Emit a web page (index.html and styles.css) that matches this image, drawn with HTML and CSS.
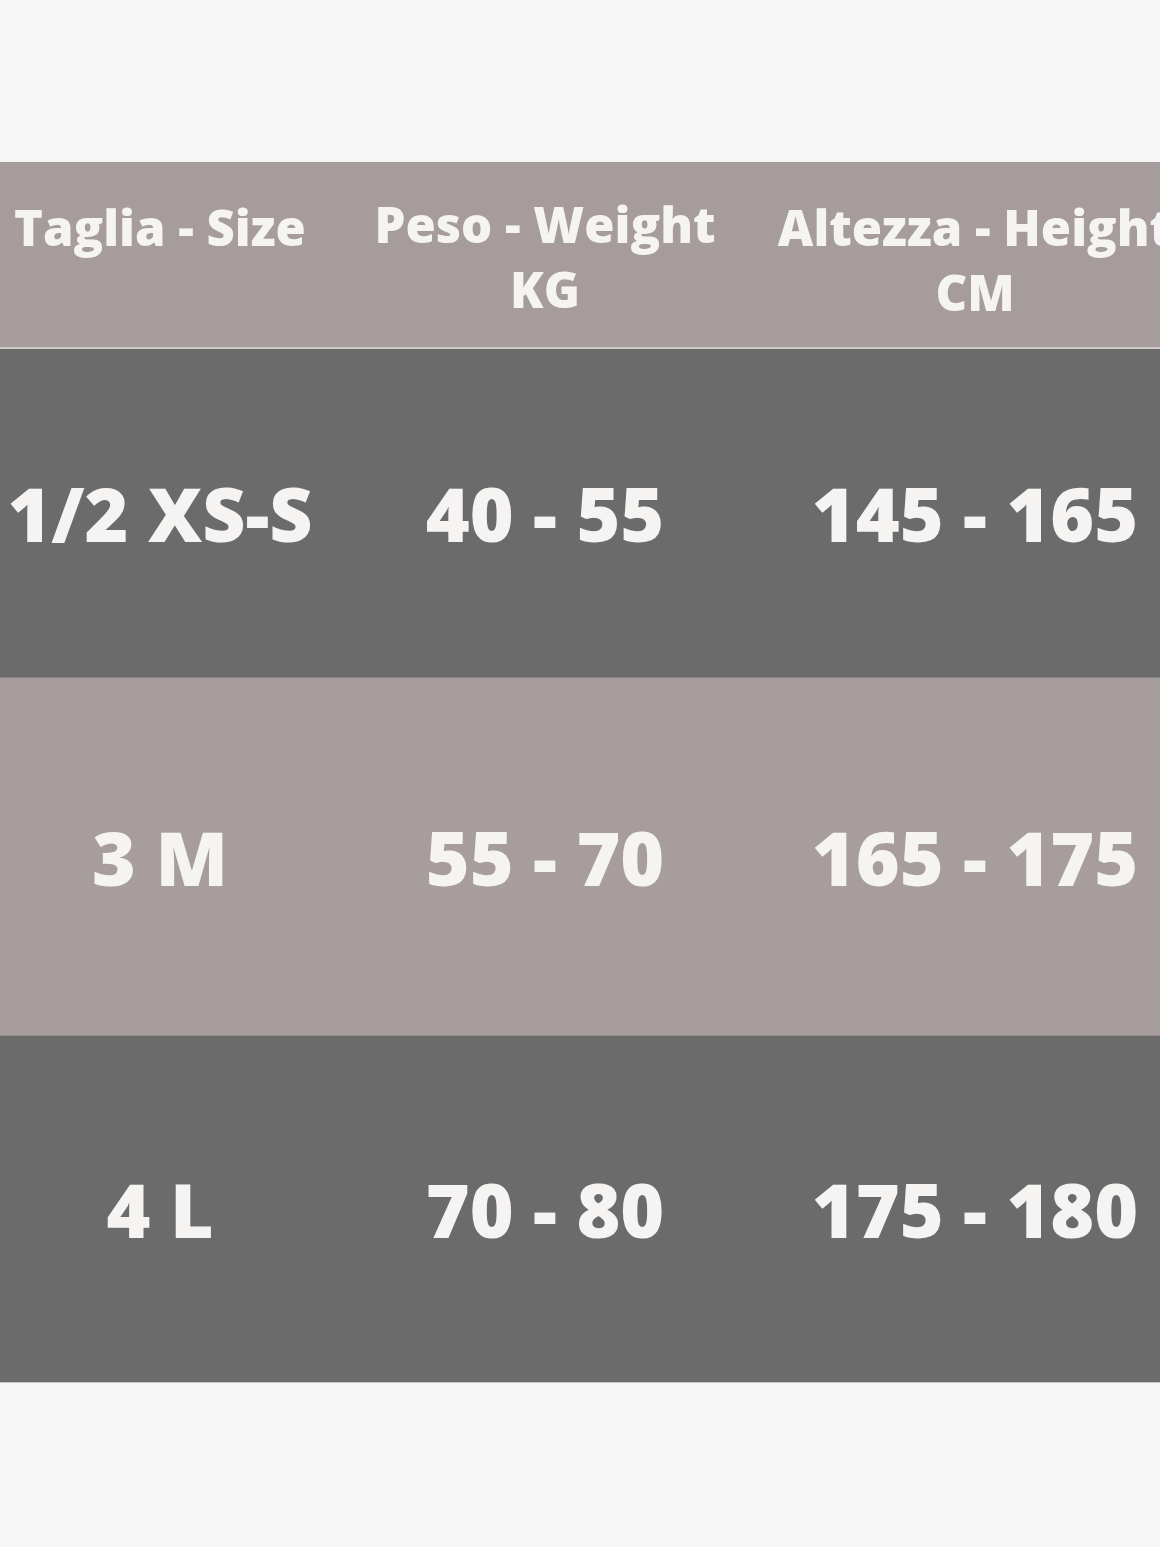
FILE: index.html
```html
<!DOCTYPE html>
<html lang="it">
<head>
<meta charset="utf-8">
<title>Taglie</title>
<link rel="stylesheet" href="styles.css">
</head>
<body>
<div class="page">
  <div class="chart">
    <div class="row head">
      <div class="cell c1">Taglia - Size</div>
      <div class="cell c2">Peso - Weight<br>KG</div>
      <div class="cell c3">Altezza - Height<br>CM</div>
    </div>
    <div class="row data dark r1">
      <div class="cell c1">1/2 XS-S</div>
      <div class="cell c2">40 - 55</div>
      <div class="cell c3">145 - 165</div>
    </div>
    <div class="row data light r2">
      <div class="cell c1">3 M</div>
      <div class="cell c2">55 - 70</div>
      <div class="cell c3">165 - 175</div>
    </div>
    <div class="row data dark r3">
      <div class="cell c1">4 L</div>
      <div class="cell c2">70 - 80</div>
      <div class="cell c3">175 - 180</div>
    </div>
  </div>
</div>
</body>
</html>
```
FILE: styles.css
```css
html, body {
  margin: 0;
  padding: 0;
  background: #f6f6f6;
}
.page {
  width: 1160px;
  height: 1547px;
  overflow: hidden;
  padding-top: 162px;
  box-sizing: border-box;
}
.chart {
  width: 1180px;
  font-family: "Open Sans", "DejaVu Sans", sans-serif;
  font-weight: 800;
  color: #f6f4f3;
}
.row {
  display: grid;
  grid-template-columns: 320px 450px 410px;
  box-sizing: border-box;
}
.cell {
  text-align: center;
}
.head {
  background: #a59c9b;
  height: 187px;
  padding-top: 30px;
  font-size: 49px;
  line-height: 65px;
  border-bottom: 2px solid #cfcac9;
  align-items: start;
}
.head .c1 { padding-top: 3px; }
.head .c3 { padding-top: 3px; }
.data {
  align-items: center;
  font-size: 75px;
}
.dark { background: #6b6b6b; }
.light { background: #a69d9c; }
.r1 { height: 328px; }
.r2 { height: 358px; border-top: 1px solid #8a8584; }
.r3 { height: 348px; border-top: 1px solid #958f8e; border-bottom: 1px solid #c8c6c6; }
```
